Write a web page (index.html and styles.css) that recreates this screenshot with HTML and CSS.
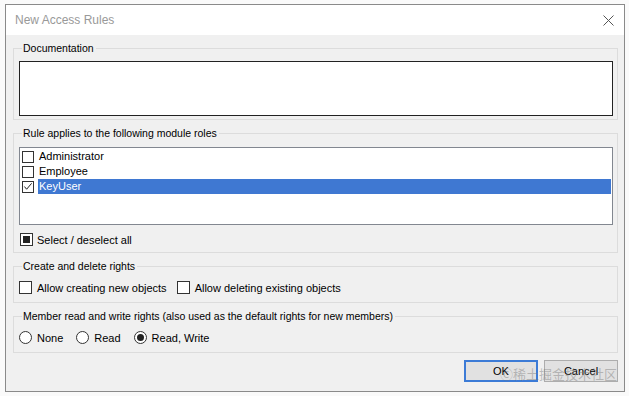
FILE: index.html
```html
<!DOCTYPE html>
<html lang="en">
<head>
    <meta charset="UTF-8">
    <title>New Access Rules</title>
    <link rel="stylesheet" href="styles.css">
</head>
<body>
    <div class="dialog">
        <div class="title-bar">
            <div class="title">New Access Rules</div>
            <svg class="close" width="11" height="11" viewBox="0 0 11 11">
                <path d="M0.5 0.5 L10.5 10.5 M10.5 0.5 L0.5 10.5" stroke="#555" stroke-width="1" fill="none"/>
            </svg>
        </div>
        <div class="dialog-body">
            <fieldset class="group">
                <legend>Documentation</legend>
                <div class="doc-box"></div>
            </fieldset>

            <fieldset class="group">
                <legend>Rule applies to the following module roles</legend>
                <ul class="role-list">
                    <li><span class="check"></span><span class="role-name">Administrator</span></li>
                    <li><span class="check"></span><span class="role-name">Employee</span></li>
                    <li class="selected">
                        <span class="check checked">
                            <svg width="11" height="11" viewBox="0 0 11 11"><path d="M1.5 5.5 L4 8.5 L9.5 2" stroke="#222" stroke-width="1.1" fill="none"/></svg>
                        </span><span class="role-name">KeyUser</span>
                    </li>
                </ul>
                <div class="option-row select-all">
                    <label class="option"><span class="check mixed"><span class="mixed-fill"></span></span>Select / deselect all</label>
                </div>
            </fieldset>

            <fieldset class="group">
                <legend>Create and delete rights</legend>
                <div class="option-row">
                    <label class="option"><span class="check"></span>Allow creating new objects</label>
                    <label class="option"><span class="check"></span>Allow deleting existing objects</label>
                </div>
            </fieldset>

            <fieldset class="group">
                <legend>Member read and write rights (also used as the default rights for new members)</legend>
                <div class="option-row radios">
                    <label class="option"><span class="radio"></span>None</label>
                    <label class="option"><span class="radio"></span>Read</label>
                    <label class="option"><span class="radio on"><span class="dot"></span></span>Read, Write</label>
                </div>
            </fieldset>

            <div class="buttons">
                <button class="btn default">OK</button>
                <button class="btn">Cancel</button>
            </div>
        </div>
        <div class="watermark">&#x24B8;稀土掘金技术社区</div>
    </div>
</body>
</html>
```

FILE: styles.css
```css
* {
    margin: 0;
    padding: 0;
    box-sizing: border-box;
}

body {
    width: 629px;
    height: 396px;
    background: #fafafa;
    font-family: 'Liberation Sans', Arial, sans-serif;
    font-size: 11px;
    color: #000;
    overflow: hidden;
    padding: 4px 0 0 5px;
}

/* Dialog window */
.dialog {
    position: relative;
    width: 620px;
    height: 388px;
    border: 1px solid #8a8a8a;
    background: #f0f0f0;
    display: flex;
    flex-direction: column;
}

.title-bar {
    height: 30px;
    background: #fff;
    display: flex;
    align-items: center;
    justify-content: space-between;
    padding: 0 10px 0 9px;
}

.title {
    font-size: 12px;
    color: #999;
}

.close {
    margin-top: 1px;
}

.dialog-body {
    padding: 7px 6px 0 7px;
    display: flex;
    flex-direction: column;
    gap: 7px;
}

/* Group boxes */
.group {
    border: 1px solid #dcdcdc;
    padding: 6px 4px 3px 5px;
    min-width: 0;
}

.group legend {
    margin-left: 3px;
    padding: 0 2px 0 1px;
    line-height: 13px;
    height: 13px;
    font-size: 10.5px;
}

.doc-box {
    height: 55px;
    background: #fff;
    border: 1px solid #222;
}

/* Role list */
.role-list {
    list-style: none;
    height: 78px;
    background: #fff;
    border: 1px solid #828790;
    padding: 1px 1px 0 2px;
    margin-top: 1px;
}

.role-list li {
    height: 15px;
    display: flex;
    align-items: center;
}

.role-list .check {
    width: 12px;
    height: 12px;
    margin-right: 4px;
}

.role-name {
    flex: 1;
    height: 15px;
    line-height: 15px;
    padding-left: 1px;
}

.role-list li.selected .role-name {
    background: #3f78d2;
    color: #fff;
}

/* Check boxes and radios */
.check {
    width: 13px;
    height: 13px;
    border: 1px solid #333;
    background: #fff;
    display: inline-flex;
    align-items: center;
    justify-content: center;
    flex-shrink: 0;
}

.mixed-fill {
    width: 7px;
    height: 7px;
    background: #222;
}

.radio {
    width: 13px;
    height: 13px;
    border: 1px solid #333;
    border-radius: 50%;
    background: #fff;
    display: inline-flex;
    align-items: center;
    justify-content: center;
    flex-shrink: 0;
}

.radio .dot {
    width: 7px;
    height: 7px;
    border-radius: 50%;
    background: #222;
}

.option-row {
    display: flex;
    gap: 10px;
    height: 13px;
    margin-top: 2px;
    margin-bottom: 5px;
}

.option-row.radios {
    gap: 13px;
}

.select-all {
    margin-top: 8px;
    margin-bottom: 3px;
    padding-left: 1px;
}

.option {
    display: flex;
    align-items: center;
    gap: 5px;
    white-space: nowrap;
}

.select-all .option {
    gap: 4px;
}

/* Buttons */
.buttons {
    display: flex;
    justify-content: flex-end;
    gap: 6px;
}

.btn {
    width: 74px;
    height: 22px;
    font-family: inherit;
    font-size: 11px;
    background: #e1e1e1;
    border: 1px solid #adadad;
    color: #000;
}

.btn.default {
    border: 2px solid #3c7bd6;
}

.watermark {
    position: absolute;
    right: 7px;
    bottom: 8px;
    font-family: 'Noto Sans CJK SC', sans-serif;
    font-size: 13px;
    color: rgba(120, 120, 120, 0.45);
}
```
